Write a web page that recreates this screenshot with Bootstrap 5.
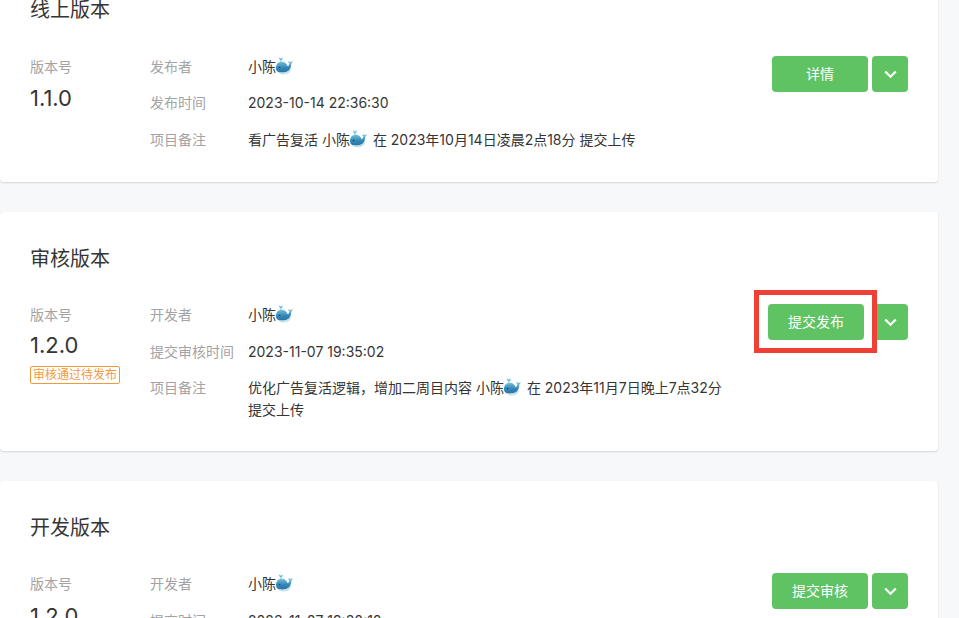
<!DOCTYPE html>
<html lang="zh-CN">
<head>
  <meta charset="UTF-8">
  <title>版本管理</title>
  <link href="https://cdn.jsdelivr.net/npm/bootstrap@5.3.0/dist/css/bootstrap.min.css" rel="stylesheet">
  <script src="https://cdn.jsdelivr.net/npm/bootstrap@5.3.0/dist/js/bootstrap.bundle.min.js"></script>
  <style>
    html, body { height: 100%; overflow: hidden; }
    body {
      background: #f7f8fa;
      color: #353535;
      font-family: "Inter", "Noto Sans CJK SC", sans-serif;
      font-size: 14px;
      line-height: 22.4px;
    }
    .page-wrap { margin-top: -37px; padding-right: 21px; }
    .ver-card {
      background: #fff;
      border-radius: 4px;
      box-shadow: 0 1px 2px rgba(0,0,0,.14);
      margin-bottom: 30px;
      padding: 33px 30px 29px;
    }
    .ver-card-top { padding-bottom: 31px; }
    .ver-title { font-size: 20px; line-height: 28px; font-weight: 400; margin: 0 0 32px; color: #353535; }
    .ver-card-mid .ver-title { margin-bottom: 31px; }
    .ver-card-end .ver-title { margin-bottom: 31.5px; }
    .ver-col { width: 120px; flex: none; }
    .ver-label { color: #a3a3a5; }
    .ver-num { font-size: 22px; line-height: 30px; margin-top: 5px; }
    .ver-card-mid .ver-num { margin-top: 3px; }
    .ver-tag {
      display: inline-block;
      border: 1px solid #f09a3e;
      border-radius: 2px;
      color: #f09a3e;
      font-size: 12px;
      line-height: 16px;
      padding: 0 2px;
      margin-top: 6px;
    }
    .info-row { display: flex; margin-bottom: 14px; }
    .info-row:last-child { margin-bottom: 0; }
    .info-key { width: 98px; flex: none; color: #a3a3a5; }
    .info-val { width: 476px; }
    .whale { width: 18px; height: 18px; vertical-align: -3px; margin-right: 1px; }
    .act-btn, .act-btn:hover {
      background: #5fc364;
      color: #fff;
      border: 0;
      border-radius: 4px;
      font-size: 14px;
      line-height: 22px;
      height: 36px;
      padding: 7px 0;
    }
    .act-main { width: 96px; }
    .act-more { width: 36px; display: flex; align-items: center; justify-content: center; }
    .act-gap-wide { margin-right: 8px; }
    .red-mark {
      position: absolute;
      left: -14px;
      top: -14px;
      width: 123px;
      height: 63px;
      border: 5px solid #ee4035;
    }
  </style>
</head>
<body>
  <svg width="0" height="0" class="position-absolute">
    <defs>
      <linearGradient id="whaleBody" x1="0" y1="0" x2="0" y2="1">
        <stop offset="0" stop-color="#7cc4de"/>
        <stop offset="0.55" stop-color="#3488ba"/>
        <stop offset="1" stop-color="#2b72a3"/>
      </linearGradient>
      <symbol id="whale" viewBox="0 0 18 18">
        <path d="M3.200.6c.6.3 1.300.8 1.700 1.500.4-.7 1.100-1.200 1.700-1.500.3 1.200-.4 2.200-1.300 2.700v1.900h-.8V3.300C3.600 2.800 2.900 1.800 3.200.6z" fill="#52bcdc"/>
        <path d="M0 11.200C0 7.600 2.300 4.800 5.600 4.800c3.200 0 5.200 2 6 4.500.9-.4 1.800-1.400 1.900-3-.7-.3-1.200-1-1.300-2 .9 0 1.700.4 2.300 1 .5-.7 1.300-1 2.200-1-.1 1-.6 1.700-1.400 2.100.1 3.900-1.700 8.300-6.300 9C4 16.500 0 15 0 11.200z" fill="url(#whaleBody)"/>
        <path d="M.8 14.300c2.700 1.500 7 1.500 10.300.3 1.800-.7 3.300-1.800 4.300-3.100-.3 3-3.300 6-7.800 6-3.400 0-5.700-1.300-6.800-3.200z" fill="#c3e2ec"/>
        <circle cx="3.600" cy="10.400" r=".7" fill="#17384f"/>
      </symbol>
    </defs>
  </svg>

  <div class="page-wrap">

    <div class="ver-card ver-card-top">
      <h2 class="ver-title">线上版本</h2>
      <div class="d-flex">
        <div class="ver-col">
          <div class="ver-label">版本号</div>
          <div class="ver-num">1.1.0</div>
        </div>
        <div class="flex-grow-1">
          <div class="info-row"><div class="info-key">发布者</div><div class="info-val">小陈<svg class="whale"><use href="#whale"/></svg></div></div>
          <div class="info-row"><div class="info-key">发布时间</div><div class="info-val">2023-10-14 22:36:30</div></div>
          <div class="info-row"><div class="info-key">项目备注</div><div class="info-val">看广告复活 小陈<svg class="whale"><use href="#whale"/></svg> 在 2023年10月14日凌晨2点18分 提交上传</div></div>
        </div>
        <div class="d-flex gap-1 align-items-start">
          <button type="button" class="btn act-btn act-main">详情</button>
          <button type="button" class="btn act-btn act-more"><svg width="13" height="9" viewBox="0 0 13 9"><path d="M1.200 1.500 6.500 6.800l5.300-5.300" fill="none" stroke="#fff" stroke-width="2.200"/></svg></button>
        </div>
      </div>
    </div>

    <div class="ver-card ver-card-mid">
      <h2 class="ver-title">审核版本</h2>
      <div class="d-flex">
        <div class="ver-col">
          <div class="ver-label">版本号</div>
          <div class="ver-num">1.2.0</div>
          <span class="ver-tag">审核通过待发布</span>
        </div>
        <div class="flex-grow-1">
          <div class="info-row"><div class="info-key">开发者</div><div class="info-val">小陈<svg class="whale"><use href="#whale"/></svg></div></div>
          <div class="info-row"><div class="info-key">提交审核时间</div><div class="info-val">2023-11-07 19:35:02</div></div>
          <div class="info-row"><div class="info-key">项目备注</div><div class="info-val">优化广告复活逻辑，增加二周目内容 小陈<svg class="whale"><use href="#whale"/></svg> 在 2023年11月7日晚上7点32分 提交上传</div></div>
        </div>
        <div class="d-flex align-items-start position-relative">
          <button type="button" class="btn act-btn act-main act-gap-wide">提交发布</button>
          <button type="button" class="btn act-btn act-more"><svg width="13" height="9" viewBox="0 0 13 9"><path d="M1.200 1.500 6.500 6.800l5.300-5.300" fill="none" stroke="#fff" stroke-width="2.200"/></svg></button>
          <div class="red-mark"></div>
        </div>
      </div>
    </div>

    <div class="ver-card ver-card-end">
      <h2 class="ver-title">开发版本</h2>
      <div class="d-flex">
        <div class="ver-col">
          <div class="ver-label">版本号</div>
          <div class="ver-num">1.2.0</div>
        </div>
        <div class="flex-grow-1">
          <div class="info-row"><div class="info-key">开发者</div><div class="info-val">小陈<svg class="whale"><use href="#whale"/></svg></div></div>
          <div class="info-row"><div class="info-key">提交时间</div><div class="info-val">2023-11-07 19:30:10</div></div>
          <div class="info-row"><div class="info-key">项目备注</div><div class="info-val">优化广告复活逻辑</div></div>
        </div>
        <div class="d-flex gap-1 align-items-start">
          <button type="button" class="btn act-btn act-main">提交审核</button>
          <button type="button" class="btn act-btn act-more"><svg width="13" height="9" viewBox="0 0 13 9"><path d="M1.200 1.500 6.500 6.800l5.300-5.300" fill="none" stroke="#fff" stroke-width="2.200"/></svg></button>
        </div>
      </div>
    </div>

  </div>
</body>
</html>
